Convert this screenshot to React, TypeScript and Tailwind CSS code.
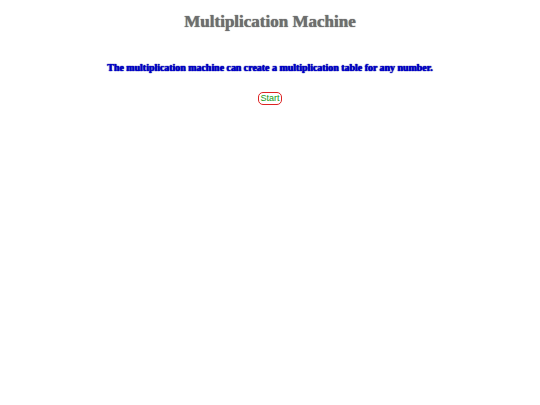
import React from 'react';

export default function App() {
  return (
    <div className="w-[540px] h-[405px] bg-white flex flex-col items-center font-['Liberation_Serif',serif]">
      {/* Title */}
      <h1 className="mt-[11px] text-[17px] leading-[22px] font-bold text-[#6e6e6e] [text-shadow:0_0_1px_#555]">
        Multiplication Machine
      </h1>

      <p className="mt-[28px] text-[10px] leading-[14px] font-bold tracking-[-0.04px] text-[#0000d0] [text-shadow:0_0_1px_#000090,0_0_1px_#000090]">
        The multiplication machine can create a multiplication table for any number.
      </p>

      <button className="mt-[17px] h-[13px] px-[1px] rounded-[5px] border border-[#dd2222] bg-white text-[#119911] text-[9px] leading-[11px] font-['Liberation_Sans',sans-serif]">
        Start
      </button>
    </div>
  );
}
